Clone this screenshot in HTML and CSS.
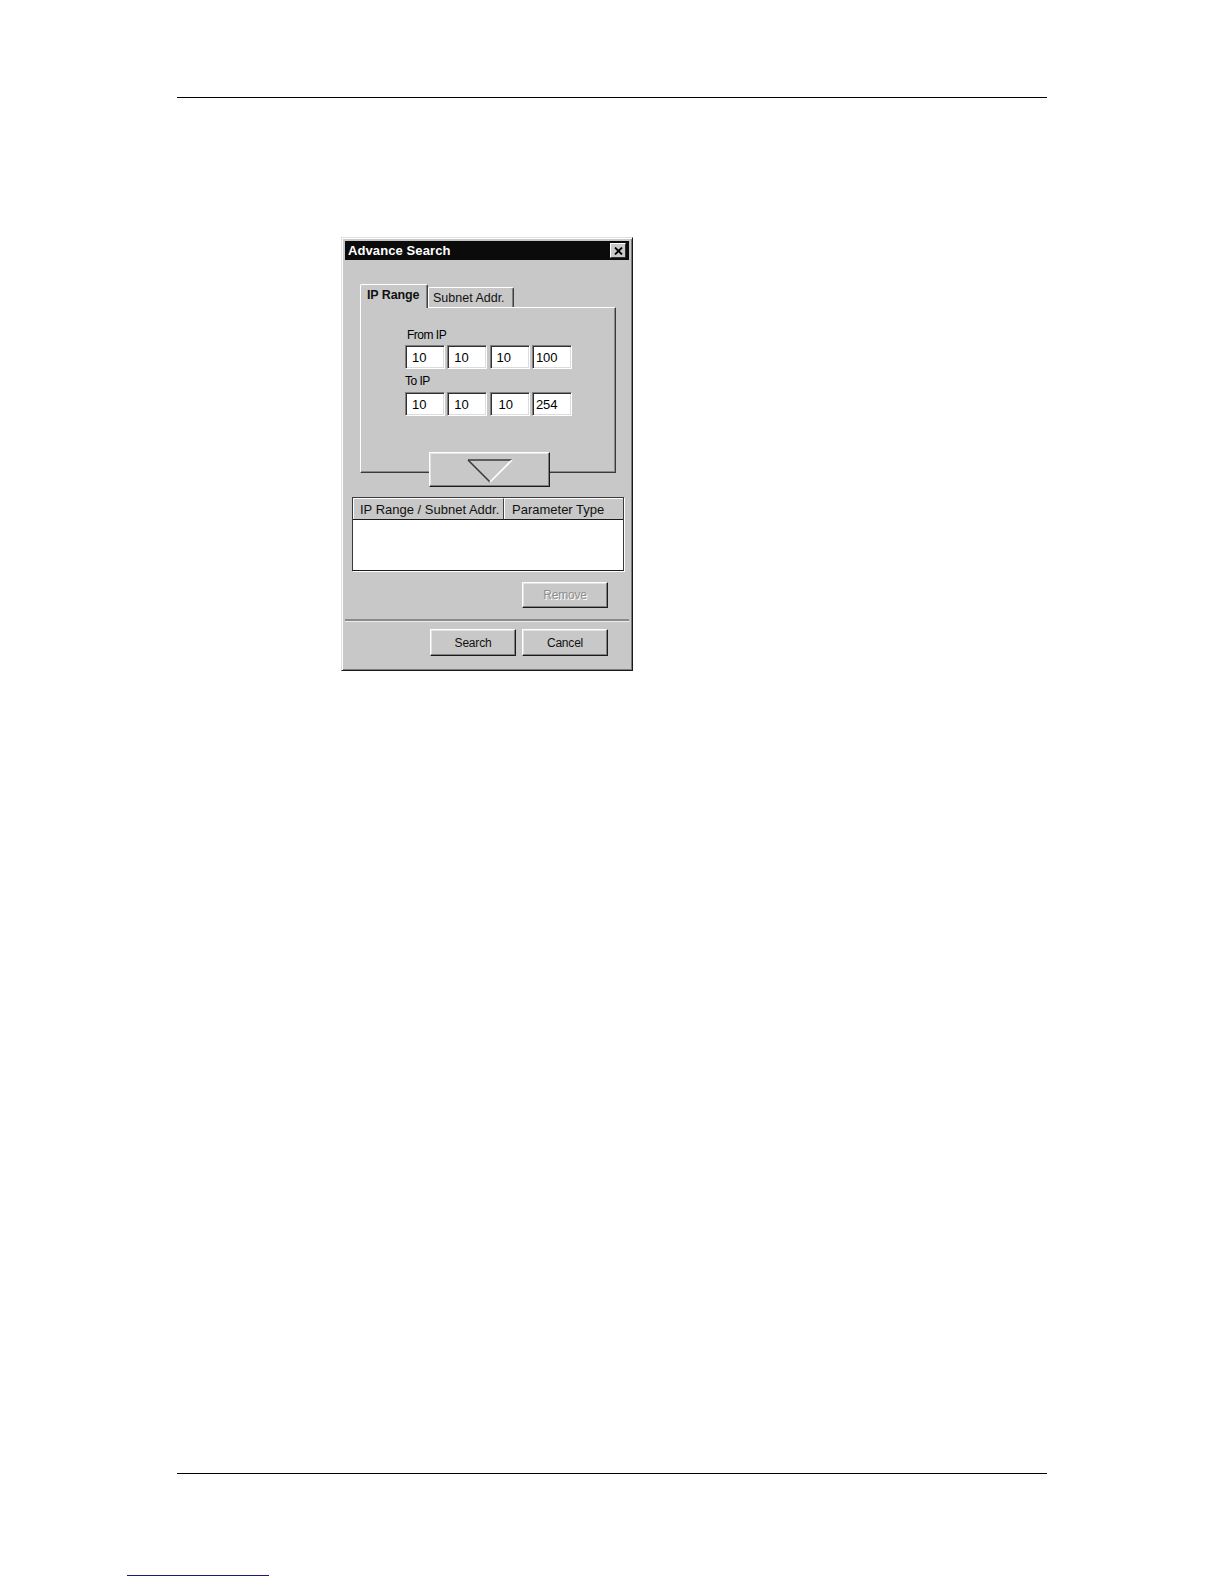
FILE: index.html
```html
<!DOCTYPE html>
<html>
<head>
<meta charset="utf-8">
<title>Advance Search</title>
<link rel="stylesheet" href="styles.css">
</head>
<body>
<div class="page">
  <div class="rule top-rule"></div>

  <div class="dialog">
    <div class="titlebar">
      <span class="title">Advance Search</span>
      <span class="close">
        <svg width="9" height="8" viewBox="0 0 9 8"><path d="M1 0.5 L8 7.5 M8 0.5 L1 7.5" stroke="#000" stroke-width="1.8" fill="none"/></svg>
      </span>
    </div>

    <div class="dialog-body">
      <div class="tabs">
        <div class="tab active">IP Range</div>
        <div class="tab">Subnet Addr.</div>
      </div>
      <div class="panel">
        <div class="field-label">From IP</div>
        <div class="ip-row">
          <div class="ip">10</div>
          <div class="ip">10</div>
          <div class="ip">10</div>
          <div class="ip wide">100</div>
        </div>
        <div class="field-label to">To IP</div>
        <div class="ip-row">
          <div class="ip">10</div>
          <div class="ip">10</div>
          <div class="ip shifted">10</div>
          <div class="ip wide">254</div>
        </div>
      </div>
      <div class="add-btn">
        <svg width="48" height="24" viewBox="0 0 48 24">
          <path d="M2 1 L46 1" stroke="#3a3a3a" stroke-width="1.6" fill="none"/>
          <path d="M2 1 L24 23" stroke="#3a3a3a" stroke-width="1.6" fill="none"/>
          <path d="M46 1 L24 23" stroke="#ffffff" stroke-width="1.6" fill="none"/>
        </svg>
      </div>
      <div class="list">
        <div class="list-head">
          <div class="col c1">IP Range / Subnet Addr.</div>
          <div class="col c2">Parameter Type</div>
        </div>
        <div class="list-body"></div>
      </div>
      <div class="remove-row">
        <div class="btn disabled">Remove</div>
      </div>
    </div>

    <div class="sep"></div>

    <div class="footer">
      <div class="btn">Search</div>
      <div class="btn">Cancel</div>
    </div>
  </div>

  <div class="rule bottom-rule"></div>
  <div class="link-line"></div>
</div>
</body>
</html>
```

FILE: styles.css
```css
html, body {
  margin: 0;
  padding: 0;
  background: #ffffff;
}

body {
  font-family: "Liberation Sans", Arial, sans-serif;
  font-size: 12px;
  color: #000;
}

.page {
  width: 1224px;
  height: 1584px;
  overflow: hidden;
  padding-top: 97px;
  box-sizing: border-box;
}

.rule {
  height: 1px;
  background: #000;
  margin-left: 177px;
  width: 870px;
}

/* ---------- dialog ---------- */
.dialog {
  margin-top: 139px;
  margin-left: 341px;
  width: 292px;
  height: 434px;
  box-sizing: border-box;
  background: #c8c8c8;
  border: 1px solid;
  border-color: #dedede #1a1a1a #1a1a1a #dedede;
  box-shadow: inset 1px 1px 0 #ffffff, inset -1px -1px 0 #7c7c7c;
  padding: 3px 3px 0;
}

.titlebar {
  height: 19px;
  background: #0b0b0b;
  display: flex;
  align-items: center;
  justify-content: space-between;
  padding: 0 3px 0 3px;
}

.title {
  color: #ffffff;
  font-weight: bold;
  font-size: 13px;
  letter-spacing: 0.1px;
}

.close {
  width: 16px;
  height: 15px;
  box-sizing: border-box;
  background: #c8c8c8;
  border: 1px solid;
  border-color: #ffffff #303030 #303030 #ffffff;
  display: flex;
  align-items: center;
  justify-content: center;
}

.dialog-body {
  padding-top: 24px;
}

/* tabs */
.tabs {
  margin-left: 15px;
  height: 23px;
  display: flex;
  align-items: flex-end;
  position: relative;
  z-index: 2;
}

.tab {
  box-sizing: border-box;
  height: 20px;
  width: 86px;
  border: 1px solid;
  border-bottom: none;
  border-color: #ffffff #404040 #404040 #ffffff;
  box-shadow: inset -1px 0 0 #808080;
  border-radius: 2px 2px 0 0;
  display: flex;
  align-items: center;
  padding-left: 4px;
  padding-top: 1px;
  font-size: 12.5px;
  color: #111;
}

.tab.active {
  height: 24px;
  width: 68px;
  margin-bottom: -1px;
  background: #c8c8c8;
  font-weight: bold;
  font-size: 12.5px;
  padding-left: 6px;
  padding-top: 0;
  padding-bottom: 3px;
  letter-spacing: -0.1px;
}

.panel {
  margin-left: 15px;
  width: 256px;
  height: 166px;
  box-sizing: border-box;
  border: 1px solid;
  border-color: #ffffff #3a3a3a #3a3a3a #ffffff;
  box-shadow: inset -1px -1px 0 #8a8a8a;
  padding: 20px 0 0 44px;
}

.field-label {
  line-height: 14px;
  height: 14px;
  margin-left: 2px;
  margin-bottom: 3px;
  font-size: 12px;
  letter-spacing: -0.5px;
}

.field-label.to {
  margin-top: 5px;
  margin-left: 0;
  margin-bottom: 4px;
}

.ip-row {
  display: flex;
  gap: 2.3px;
}

.ip {
  width: 40px;
  height: 24px;
  box-sizing: border-box;
  background: #ffffff;
  border: 1px solid;
  border-color: #808080 #ffffff #ffffff #808080;
  box-shadow: inset 1px 1px 0 #303030, inset -1px -1px 0 #dcdcdc;
  padding: 5px 0 0 6px;
  font-size: 13px;
  line-height: 14px;
}

.ip.wide {
  padding-left: 3px;
}

.ip.shifted {
  padding-left: 8px;
}

/* add (down arrow) button */
.add-btn {
  position: relative;
  z-index: 2;
  margin-top: -21px;
  margin-left: 84px;
  width: 121px;
  height: 35px;
  box-sizing: border-box;
  background: #c8c8c8;
  border: 1px solid;
  border-color: #ffffff #1a1a1a #1a1a1a #ffffff;
  box-shadow: inset -1px -1px 0 #808080, inset 1px 1px 0 #e4e4e4;
  display: flex;
  justify-content: center;
  padding-top: 6px;
}

/* list */
.list {
  margin-top: 10px;
  margin-left: 7px;
  width: 272px;
  box-sizing: border-box;
  border: 1px solid;
  border-color: #3a3a3a #3a3a3a #1a1a1a #3a3a3a;
  box-shadow: 1px 1px 0 #ffffff;
}

.list-head {
  display: flex;
  height: 21px;
  border-bottom: 1px solid #1a1a1a;
}

.col {
  box-sizing: border-box;
  height: 21px;
  display: flex;
  align-items: center;
  padding-left: 6px;
  background: #c8c8c8;
  border-left: 1px solid #ffffff;
  border-top: 1px solid #ffffff;
  font-size: 13px;
  color: #111;
}

.c1 {
  width: 151px;
  border-right: 1px solid #404040;
}

.c2 {
  flex: 1;
  padding-left: 7px;
}

.list-body {
  height: 50px;
  background: #ffffff;
}

/* buttons */
.remove-row {
  margin-top: 11px;
  margin-left: 177px;
}

.btn {
  width: 86px;
  height: 27px;
  box-sizing: border-box;
  background: #c8c8c8;
  border: 1px solid;
  border-color: #ffffff #1a1a1a #1a1a1a #ffffff;
  box-shadow: inset -1px -1px 0 #808080, inset 1px 1px 0 #e2e2e2;
  display: flex;
  align-items: center;
  justify-content: center;
  font-size: 12px;
  letter-spacing: -0.2px;
  color: #111;
}

.btn.disabled {
  height: 26px;
  color: #8e8e8e;
  text-shadow: 1px 1px 0 #ffffff;
}

.sep {
  margin-top: 11px;
  width: 284px;
  border-top: 2px solid #8a8a8a;
  border-bottom: 1px solid #ececec;
}

.footer {
  margin-top: 7px;
  margin-left: 85px;
  display: flex;
  gap: 6px;
}

/* bottom of page */
.bottom-rule {
  margin-top: 802px;
}

.link-line {
  margin-top: 101px;
  margin-left: 127px;
  width: 142px;
  height: 1px;
  background: #1a1a7a;
}
```
